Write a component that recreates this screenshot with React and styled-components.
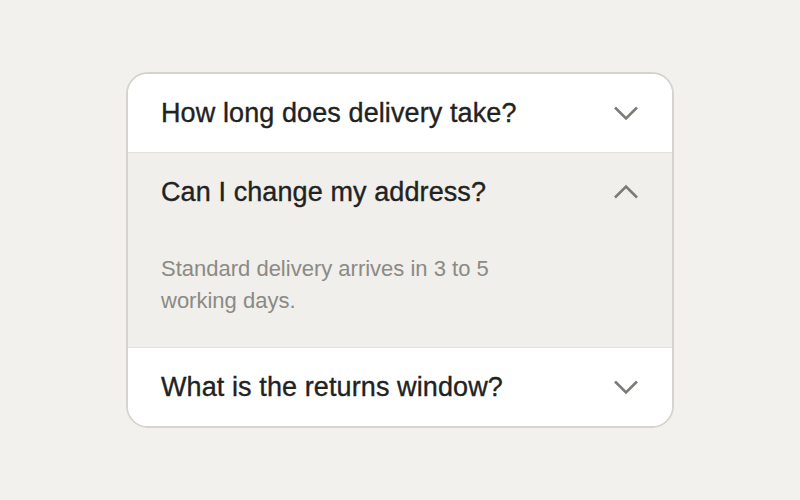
import React, { useState } from "react";
import styled, { createGlobalStyle } from "styled-components";

const GlobalStyle = createGlobalStyle`
  html, body {
    margin: 0;
    padding: 0;
    background: #f2f1ed;
  }
  body {
    font-family: "Liberation Sans", Arial, sans-serif;
  }
`;

const faqs = [
  {
    id: 1,
    question: "How long does delivery take?",
    answer: "Most orders ship within one business day.",
  },
  {
    id: 2,
    question: "Can I change my address?",
    answer: "Standard delivery arrives in 3 to 5 working days.",
  },
  {
    id: 3,
    question: "What is the returns window?",
    answer: "You can return items within 30 days.",
  },
];

function Chevron({ up }) {
  return (
    <Icon viewBox="0 0 24 24" $up={up}>
      <path d="M1 6.5 L12 17.5 L23 6.5" />
    </Icon>
  );
}

function App() {
  const [open, setOpen] = useState(2);
  return (
    <Page>
      <GlobalStyle />
      <Card>
        {faqs.map((faq) => {
          const isOpen = open === faq.id;
          return (
            <Item key={faq.id} $open={isOpen}>
              <Header onClick={() => setOpen(isOpen ? null : faq.id)}>
                <Question>{faq.question}</Question>
                <Chevron up={isOpen} />
              </Header>
              {isOpen && <Answer>{faq.answer}</Answer>}
            </Item>
          );
        })}
      </Card>
    </Page>
  );
}

export default App;

const Page = styled.div`
  width: 800px;
  height: 500px;
  display: flex;
  align-items: center;
  justify-content: center;
`;

const Card = styled.div`
  width: 544px;
  background: #ffffff;
  border: 2px solid #d6d4cc;
  border-radius: 22px;
  overflow: hidden;
  display: flex;
  flex-direction: column;
`;

const Item = styled.div`
  background: ${(p) => (p.$open ? "#f0efeb" : "#ffffff")};
  & + & {
    border-top: 1px solid #e3e1db;
  }
`;

const Header = styled.button`
  all: unset;
  box-sizing: border-box;
  width: 100%;
  height: 78px;
  padding: 0 34px 0 33px;
  display: flex;
  align-items: center;
  justify-content: space-between;
  cursor: pointer;
`;

const Question = styled.span`
  font-family: "Liberation Sans", Arial, sans-serif;
  font-size: 27px;
  letter-spacing: 0.1px;
  color: #22221f;
  -webkit-text-stroke: 0.35px #22221f;
`;

const Icon = styled.svg`
  width: 24px;
  height: 24px;
  fill: none;
  stroke: #7c7b76;
  stroke-width: 2.6;
  stroke-linecap: butt;
  stroke-linejoin: miter;
  transform: ${(p) => (p.$up ? "rotate(180deg)" : "none")};
`;

const Answer = styled.p`
  margin: 0;
  padding: 22px 32px 30px 33px;
  max-width: 360px;
  font-size: 22px;
  line-height: 32px;
  color: #8b8a85;
`;
